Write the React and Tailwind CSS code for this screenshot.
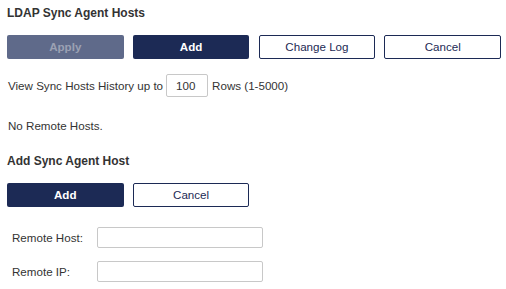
export default function App() {
  const font = { fontFamily: '"Liberation Sans", Arial, sans-serif' };
  return (
    <div className="w-[506px] h-[289px] bg-white text-[11.6px] text-[#333333] pl-[7px] pr-[4px]" style={font}>
      <div className="pt-[6px] leading-[14px] font-bold text-[12px]">LDAP Sync Agent Hosts</div>
      <div className="mt-[15px] flex gap-[9.33px]">
        <button className="w-[116.5px] shrink-0 h-[24px] rounded-[2px] bg-[#5f6a8a] text-[#9ba1b3] font-bold">Apply</button>
        <button className="w-[116.5px] shrink-0 h-[24px] rounded-[2px] bg-[#1c2a55] text-white font-bold">Add</button>
        <button className="w-[116.5px] shrink-0 h-[24px] rounded-[2px] border border-[#1c2a55] bg-white text-[#1c2a55]">Change Log</button>
        <button className="w-[116.5px] shrink-0 h-[24px] rounded-[2px] border border-[#1c2a55] bg-white text-[#1c2a55]">Cancel</button>
      </div>
      <div className="mt-[15px] flex items-center">
        <span className="pl-[1px]">View Sync Hosts History up to</span>
        <input
          readOnly
          value="100"
          className="ml-[3px] w-[42px] h-[23px] border border-[#c8c8c8] rounded-[2px] px-[9px] text-[11.6px] text-[#333333] outline-none"
          style={font}
        />
        <span className="ml-[4px]">Rows (1-5000)</span>
      </div>
      <div className="mt-[22px] leading-[14px] pl-[1px]">No Remote Hosts.</div>
      <div className="mt-[21px] leading-[14px] font-bold text-[12px]">Add Sync Agent Host</div>
      <div className="mt-[15px] flex gap-[9.33px]">
        <button className="w-[116.5px] shrink-0 h-[24px] rounded-[2px] bg-[#1c2a55] text-white font-bold">Add</button>
        <button className="w-[116.5px] shrink-0 h-[24px] rounded-[2px] border border-[#1c2a55] bg-white text-[#1c2a55]">Cancel</button>
      </div>
      <div className="mt-[20px] flex items-center">
        <span className="pl-[5px] w-[90px]">Remote Host:</span>
        <input className="w-[166px] h-[21px] border border-[#c8c8c8] rounded-[2px] outline-none" />
      </div>
      <div className="mt-[13px] flex items-center">
        <span className="pl-[5px] w-[90px]">Remote IP:</span>
        <input className="w-[166px] h-[21px] border border-[#c8c8c8] rounded-[2px] outline-none" />
      </div>
    </div>
  );
}
